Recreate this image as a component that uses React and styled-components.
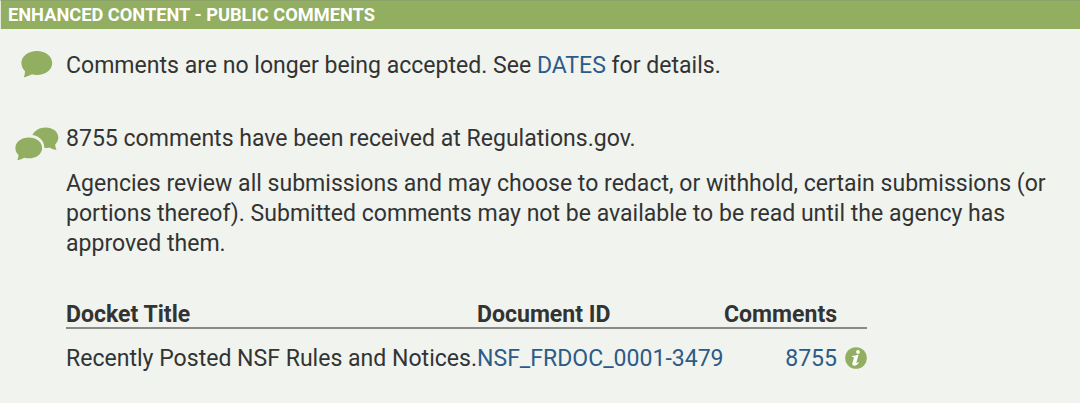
import styled, { createGlobalStyle } from 'styled-components';

const green = '#91ae61';
const linkBlue = '#2c5b88';

const dockets = [
  {
    title: 'Recently Posted NSF Rules and Notices.',
    id: 'NSF_FRDOC_0001-3479',
    comments: 8755,
  },
];

function CommentIcon(){
  return (
    <Bubble width="32" height="28" viewBox="0 0 32 28">
      <path d="M15.9 1C24.6 1 31.2 6.2 31.2 13S24.6 25 15.9 25c-1.8 0-3.6-.2-5.2-.7C8.500 25.700 6 26.600 2.800 27.400c.8-2.200 1.200-4 1.300-6.200C1.800 19 .4 16.200.4 13 .4 6.200 7.200 1 15.900 1z" />
    </Bubble>
  );
}

function CommentsIcon(){
  return (
    <Bubble width="44" height="35" viewBox="0 0 44 35">
      <path d="M17.400 9.100C20 4.300 24.800 1.600 30.500 1.600c7.300 0 12.800 4.300 12.800 10 0 2.700-1.200 5.100-3.200 6.900.1 2 .6 3.700 1.400 5.500-2.900-.6-5.200-1.300-7.200-2.600-1.500.4-3.200.6-4.900.5C29.300 15 24.500 10.200 17.400 9.100z" />
      <path d="M13.800 11.400c7.500 0 13.300 4.600 13.300 10.500S21.300 32.300 13.800 32.300c-1.600 0-3.100-.2-4.500-.6-2 1.200-4.100 1.900-7 2.600.7-1.800 1.100-3.400 1.200-5.300C1.500 27.100.4 24.700.4 21.900c0-5.900 5.900-10.500 13.400-10.500z" />
    </Bubble>
  );
}

function InfoIcon(){
  return (
    <Info width="22" height="22" viewBox="0 0 22 22">
      <circle cx="11" cy="11" r="10.800" fill={green} />
      <circle cx="13" cy="4.900" r="1.900" fill="#fff" />
      <path d="M7.100 9c2.200-.2 4.300-.6 6.500-1.400l-2.200 7.800c-.3 1.200.5 1.100 1.700-.3l.7.600c-1.400 2.100-2.900 3-4.500 3-1.900 0-2.300-1.200-1.800-2.900l1.400-4.700c.2-.9-.3-1.200-1.800-1.200z" fill="#fff" />
    </Info>
  );
}

function App(){
  return (
    <Panel>
      <GlobalStyle />
      <Header>Enhanced Content - Public Comments</Header>
      <Body>
        <Row $gap={43}>
          <IconCell $left={21}><CommentIcon /></IconCell>
          <Text>
            Comments are no longer being accepted. See <Link href="#dates">DATES</Link> for details.
          </Text>
        </Row>
        <Row $gap={15}>
          <IconCell $left={15} $top={3}><CommentsIcon /></IconCell>
          <Text>8755 comments have been received at Regulations.gov.</Text>
        </Row>
        <Details>
          <Text>
            Agencies review all submissions and may choose to redact, or withhold, certain submissions (or<br />
            portions thereof). Submitted comments may not be available to be read until the agency has<br />
            approved them.
          </Text>
          <Table>
            <thead>
              <tr>
                <Th $width={411}>Docket Title</Th>
                <Th $width={247}>Document ID</Th>
                <Th $width={143}>Comments</Th>
              </tr>
            </thead>
            <tbody>
              {dockets.map((docket) => (
                <tr key={docket.id}>
                  <Td>{docket.title}</Td>
                  <Td><Link href="#docket">{docket.id}</Link></Td>
                  <Td>
                    <Count>
                      <Link href="#comments">{docket.comments}</Link>
                      <InfoIcon />
                    </Count>
                  </Td>
                </tr>
              ))}
            </tbody>
          </Table>
        </Details>
      </Body>
    </Panel>
  );
}

export default App;

const GlobalStyle = createGlobalStyle`
  * {
    box-sizing: border-box;
  }
  body {
    margin: 0;
    background: #f0f3ee;
    overflow: hidden;
  }
`;

const Panel = styled.div`
  width: 1080px;
  height: 403px;
  background: #f0f3ee;
  color: #333;
  font-family: Roboto, sans-serif;
  font-size: 23.06px;
  line-height: 30px;
`;

const Header = styled.div`
  height: 29px;
  padding-left: 7px;
  border-left: 1px solid #e4eadb;
  border-top: 1px solid #8da268;
  background: ${green};
  color: #fff;
  font-size: 18.24px;
  font-weight: bold;
  line-height: 28px;
  text-transform: uppercase;
  white-space: nowrap;
`;

const Body = styled.div`
  padding-top: 22px;
`;

const Row = styled.div`
  display: flex;
  align-items: flex-start;
  height: 30px;
  margin-bottom: ${props => props.$gap}px;
`;

const IconCell = styled.div`
  width: 66px;
  flex-shrink: 0;
  margin-top: -1px;
  padding-top: ${props => props.$top || 0}px;
  padding-left: ${props => props.$left}px;
`;

const Bubble = styled.svg`
  display: block;
  fill: ${green};
`;

const Text = styled.div`
  white-space: nowrap;
`;

const Link = styled.a`
  color: ${linkBlue};
  text-decoration: none;
`;

const Details = styled.div`
  padding-left: 66px;
`;

const Table = styled.table`
  width: 801px;
  margin-top: 40px;
  border-collapse: separate;
  border-spacing: 0;
  table-layout: fixed;
  white-space: nowrap;
`;

const Th = styled.th`
  width: ${props => props.$width}px;
  height: 30px;
  padding: 4px 0 0;
  border-bottom: 2px solid #8a8b88;
  text-align: left;
  font-weight: bold;
  line-height: 24px;
`;

const Td = styled.td`
  padding: 15px 0 0;
`;

const Count = styled.div`
  display: flex;
  align-items: center;
  justify-content: flex-end;
  gap: 8px;
`;

const Info = styled.svg`
  display: block;
  margin-bottom: 2px;
`;
